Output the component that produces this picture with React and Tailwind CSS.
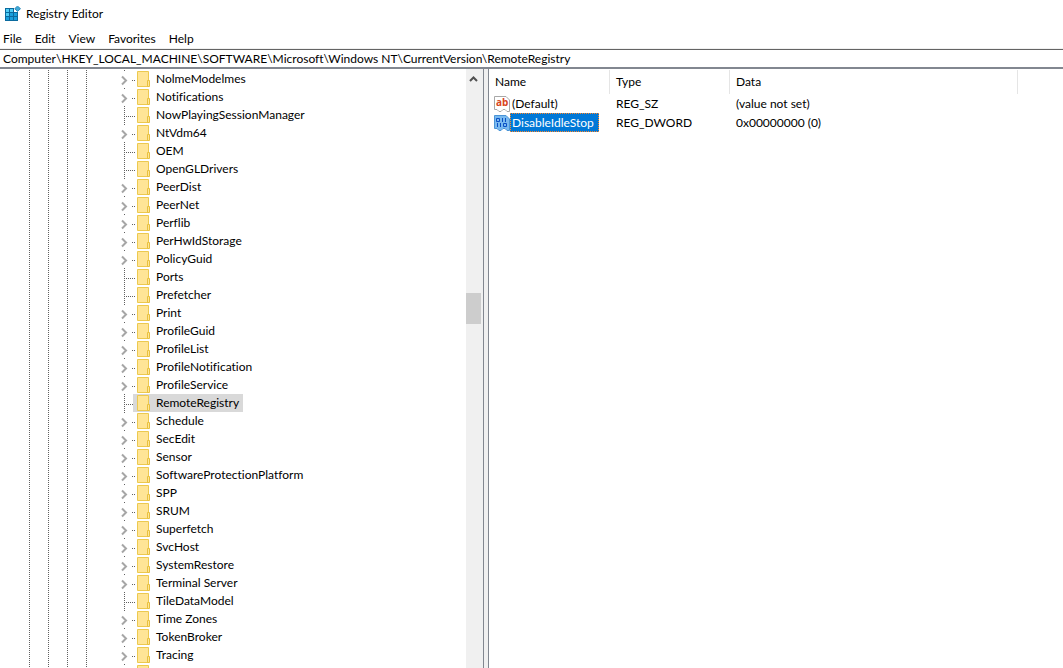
import { useState } from 'react';

const MENU_ITEMS = ['File', 'Edit', 'View', 'Favorites', 'Help'];

const KEYS = [
  { name: 'NolmeModelmes', expandable: true },
  { name: 'Notifications', expandable: true },
  { name: 'NowPlayingSessionManager', expandable: false },
  { name: 'NtVdm64', expandable: true },
  { name: 'OEM', expandable: false },
  { name: 'OpenGLDrivers', expandable: false },
  { name: 'PeerDist', expandable: true },
  { name: 'PeerNet', expandable: true },
  { name: 'Perflib', expandable: true },
  { name: 'PerHwIdStorage', expandable: true },
  { name: 'PolicyGuid', expandable: true },
  { name: 'Ports', expandable: false },
  { name: 'Prefetcher', expandable: false },
  { name: 'Print', expandable: true },
  { name: 'ProfileGuid', expandable: true },
  { name: 'ProfileList', expandable: true },
  { name: 'ProfileNotification', expandable: true },
  { name: 'ProfileService', expandable: true },
  { name: 'RemoteRegistry', expandable: false },
  { name: 'Schedule', expandable: true },
  { name: 'SecEdit', expandable: true },
  { name: 'Sensor', expandable: true },
  { name: 'SoftwareProtectionPlatform', expandable: true },
  { name: 'SPP', expandable: true },
  { name: 'SRUM', expandable: true },
  { name: 'Superfetch', expandable: true },
  { name: 'SvcHost', expandable: true },
  { name: 'SystemRestore', expandable: true },
  { name: 'Terminal Server', expandable: true },
  { name: 'TileDataModel', expandable: false },
  { name: 'Time Zones', expandable: true },
  { name: 'TokenBroker', expandable: true },
  { name: 'Tracing', expandable: true },
  { name: '', expandable: true },
];

const VALUES = [
  { name: '(Default)', type: 'REG_SZ', data: '(value not set)' },
  { name: 'DisableIdleStop', type: 'REG_DWORD', data: '0x00000000 (0)' },
];

const RegistryIcon = () => (
  <svg width="16" height="16" viewBox="0 0 16 16" aria-hidden="true">
    <path d="M0 2h9v4h4v9H0z" fill="#0b6a9e" />
    <path d="M1 3h3v3H1zM5 3h3v3H5zM1 7h3v3H1z" fill="#4fcdf5" />
    <path d="M5 7h3v3H5zM9 7h3v3H9zM1 11h3v3H1zM5 11h3v3H5zM9 11h3v3H9z" fill="#1a9fdc" />
    <path d="M12.500 0L15.500 2.700L12.500 5.400L9.700 2.700z" fill="#3fa9d6" stroke="#1b7bb0" strokeWidth=".8" />
  </svg>
);

const FolderIcon = () => (
  <svg width="13" height="16" viewBox="0 0 13 16" className="shrink-0" aria-hidden="true">
    <path d="M.5.5h11v15H.5z" fill="#ffe596" stroke="#ecc94f" />
    <path d="M10.500 9.500h2v6h-2z" fill="#ffe596" stroke="#e8c13f" />
  </svg>
);

const PAGE_OUTLINE = 'M.5.5H12L15.500 4V15.500H13L11 13.500H9L7 15.500H5L3 13.500H.5z';

const StringIcon = () => (
  <svg width="16" height="16" viewBox="0 0 16 16" className="shrink-0" aria-hidden="true">
    <path d={PAGE_OUTLINE} fill="#fff" stroke="#a8a8a8" />
    <text x="2" y="10" fontSize="10" fontWeight="700" fontFamily="Open Sans" fill="#d9451c">ab</text>
  </svg>
);

const BinaryIcon = () => (
  <svg width="16" height="16" viewBox="0 0 16 16" className="shrink-0" aria-hidden="true">
    <path d={PAGE_OUTLINE} fill="#79b9ef" stroke="#4a94d6" />
    <path d="M2.500 3.500h3v3h-3zM9.500 8.500h3v3h-3z" fill="none" stroke="#0a50c4" />
    <path d="M8 3h1v4H8zM11 3h1v4h-1zM3 8h1v4H3zM6 8h1v4H6z" fill="#0a50c4" />
  </svg>
);

const Connector = ({ expandable }) => (
  <svg width="28" height="18" viewBox="0 0 28 18" className="shrink-0 overflow-visible" aria-hidden="true">
    {expandable ? (
      <>
        <path d="M19 .5h1M27 10.500h1M29 10.500h1" stroke="#606060" />
        <path d="M17 6.500l4 4l-4 4" fill="none" stroke="#a6a6a6" strokeWidth="2" />
      </>
    ) : (
      <>
        <path d="M19.500 0v18" stroke="#606060" strokeDasharray="1 1" />
        <path d="M21 10.500h9" stroke="#606060" strokeDasharray="1 1" />
      </>
    )}
  </svg>
);

const Guide = () => (
  <span className="w-[19px] shrink-0 self-stretch">
    <span className="block h-full w-px bg-[repeating-linear-gradient(to_bottom,#606060_0_1px,transparent_1px_2px)]" />
  </span>
);

const TreeItem = ({ item, selected, onSelect }) => (
  <li className="flex h-[18px] items-center pl-[29px]">
    <Guide />
    <Guide />
    <Guide />
    <Guide />
    <Connector expandable={item.expandable} />
    <button
      type="button"
      onClick={onSelect}
      className={`flex h-full items-center gap-1.5 px-1 whitespace-nowrap ${selected ? 'bg-[#d9d9d9]' : ''}`}
    >
      <FolderIcon />
      {item.name}
    </button>
  </li>
);

const App = () => {
  const [selectedKey, setSelectedKey] = useState('RemoteRegistry');
  const [selectedValue, setSelectedValue] = useState('DisableIdleStop');
  const [path, setPath] = useState(
    'Computer\\HKEY_LOCAL_MACHINE\\SOFTWARE\\Microsoft\\Windows NT\\CurrentVersion\\RemoteRegistry'
  );

  return (
    <div className="flex h-screen flex-col overflow-hidden bg-white font-[Lato,sans-serif] text-[12px] leading-[18px] text-black [font-variant-ligatures:none]">
      <header className="flex h-7 shrink-0 items-center gap-[5px] pl-[5px]">
        <RegistryIcon />
        <h1>Registry Editor</h1>
      </header>

      <nav className="flex h-5 shrink-0 items-center gap-[13px] pt-0.5 pl-[3px]">
        {MENU_ITEMS.map((label) => (
          <button key={label} type="button">
            {label}
          </button>
        ))}
      </nav>

      <div className="shrink-0 border-t border-[#f0f0f0]">
        <input
          type="text"
          aria-label="Address"
          value={path}
          onChange={(e) => setPath(e.target.value)}
          className="block h-5 w-full border-t border-b-2 border-t-[#646464] border-b-[#828790] px-[3px] outline-none"
        />
      </div>

      <main className="flex min-h-0 flex-1 gap-1 bg-[#f0f0f0]">
        <section className="flex w-[484px] shrink-0 border-r border-[#828790] bg-white">
          <ul className="min-w-0 flex-1 overflow-hidden pt-px">
            {KEYS.map((item) => (
              <TreeItem
                key={item.name}
                item={item}
                selected={item.name === selectedKey}
                onSelect={() => setSelectedKey(item.name)}
              />
            ))}
          </ul>
          <div className="flex w-[17px] flex-col bg-[#f0f0f0]">
            <button type="button" aria-label="Scroll up" className="flex h-5 w-[15px] items-center justify-center">
              <svg width="9" height="6" viewBox="0 0 9 6" aria-hidden="true">
                <path d="M1 5l3.500-3.500L8 5" fill="none" stroke="#505050" strokeWidth="2" />
              </svg>
            </button>
            <div className="mt-[204px] h-[31px] w-[15px] bg-[#cdcdcd]" />
          </div>
        </section>

        <section className="min-w-0 flex-1 border-l border-[#828790] bg-white">
          <table className="w-full table-fixed border-collapse text-left">
            <colgroup>
              <col className="w-[121px]" />
              <col className="w-[120px]" />
              <col className="w-[288px]" />
              <col />
            </colgroup>
            <thead>
              <tr className="h-[25px]">
                {['Name', 'Type', 'Data'].map((label) => (
                  <th key={label} className="p-0 pt-px font-normal">
                    <div className="h-6 border-r border-[#e5e5e5] pl-1.5 leading-6">{label}</div>
                  </th>
                ))}
                <td />
              </tr>
            </thead>
            <tbody>
              {VALUES.map((value) => (
                <tr key={value.name} className="h-[19px]" onClick={() => setSelectedValue(value.name)}>
                  <td className="p-0 pl-[5px]">
                    <div className="flex h-[19px] items-center">
                      {value.type === 'REG_SZ' ? <StringIcon /> : <BinaryIcon />}
                      <span
                        className={`border border-dotted px-px leading-[17px] whitespace-nowrap ${
                          value.name === selectedValue
                            ? 'border-[#ff8728] bg-[#0078d7] pr-1 text-white'
                            : 'border-transparent'
                        }`}
                      >
                        {value.name}
                      </span>
                    </div>
                  </td>
                  <td className="p-0 pl-1.5">{value.type}</td>
                  <td className="p-0 pl-1.5">{value.data}</td>
                  <td />
                </tr>
              ))}
            </tbody>
          </table>
        </section>
      </main>
    </div>
  );
};

export default App;
